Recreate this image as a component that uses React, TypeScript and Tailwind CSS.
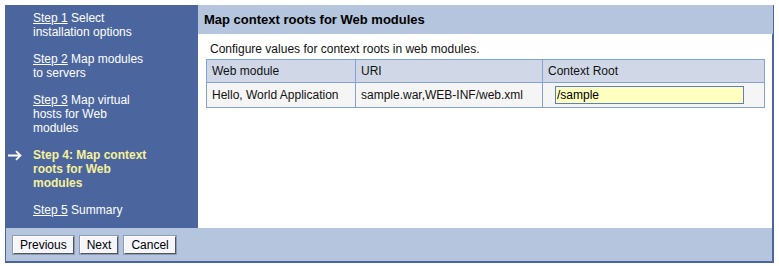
import React from "react";

const steps = [
  { n: "Step 1", text: "Select installation options" },
  { n: "Step 2", text: "Map modules to servers" },
  { n: "Step 3", text: "Map virtual hosts for Web modules" },
];

export default function App() {
  return (
    <div className="w-[779px] h-[266px] bg-white p-[5px] pb-[3px] font-['Liberation_Sans',Arial,sans-serif] text-[12px] leading-[14px]">
      <div className="flex flex-col h-full border-r-2 border-b-2 border-[#4a65a0]">
        <div className="flex flex-1">
          {/* wizard steps */}
          <div className="w-[193px] shrink-0 bg-[#4b669e] text-white pt-[6px] pl-[28px] pr-2">
            {steps.map((s) => (
              <div key={s.n} className="mb-[13px] w-[120px]">
                <span className="underline">{s.n}</span> {s.text}
              </div>
            ))}
            <div className="relative mb-[13px] mt-[1px] w-[120px] font-bold text-[#f6f19a]">
              <svg
                className="absolute -left-[26px] top-[2px]"
                width="15"
                height="11"
                viewBox="0 0 15 11"
                fill="none"
                stroke="white"
                strokeWidth="1.8"
              >
                <path d="M1 5.5h12.5M9 1.2l4.5 4.3L9 9.8" />
              </svg>
              Step 4: Map context roots for Web modules
            </div>
            <div>
              <span className="underline">Step 5</span> Summary
            </div>
          </div>

          {/* content */}
          <div className="flex-1 flex flex-col">
            <div className="h-[29px] bg-[#b4c5dd] flex items-center pl-[6px] pt-[1px] font-bold text-[13px] text-black">
              Map context roots for Web modules
            </div>
            <div className="pl-[8px] pr-[8px] pt-[8px] text-[#111]">
              <div className="pl-[4px] mb-[3px]">Configure values for context roots in web modules.</div>
              <table className="w-[559px] border-collapse border border-[#84a2d6]">
                <thead>
                  <tr className="bg-[#d0d8e8] h-[23px]">
                    <th className="border border-[#84a2d6] text-left font-normal px-[5px] w-[149px]">Web module</th>
                    <th className="border border-[#84a2d6] text-left font-normal px-[5px] w-[187px]">URI</th>
                    <th className="border border-[#84a2d6] text-left font-normal px-[5px]">Context Root</th>
                  </tr>
                </thead>
                <tbody>
                  <tr className="bg-[#f5f5f5] h-[25px]">
                    <td className="border border-[#84a2d6] px-[5px]">Hello, World Application</td>
                    <td className="border border-[#84a2d6] px-[5px]">sample.war,WEB-INF/web.xml</td>
                    <td className="border border-[#84a2d6] pl-[12px]">
                      <div className="w-[189px] h-[18px] bg-[#ffffc0] border border-[#5b80bd] pl-[1px] leading-[16px] text-black">
                        /sample
                      </div>
                    </td>
                  </tr>
                </tbody>
              </table>
            </div>
          </div>
        </div>

        {/* buttons */}
        <div className="h-[33px] bg-[#b4c5dd] border-l border-[#4a65a0] flex items-center gap-[6px] pl-[7px] pt-[1px]">
          {["Previous", "Next", "Cancel"].map((b) => (
            <button
              key={b}
              className="h-[18px] px-[6px] bg-[#f4f6fb] text-black text-[12px] leading-[14px] border border-t-white border-l-white border-r-[#555] border-b-[#555] outline outline-1 outline-[#8b9ab5]"
            >
              {b}
            </button>
          ))}
        </div>
      </div>
    </div>
  );
}
